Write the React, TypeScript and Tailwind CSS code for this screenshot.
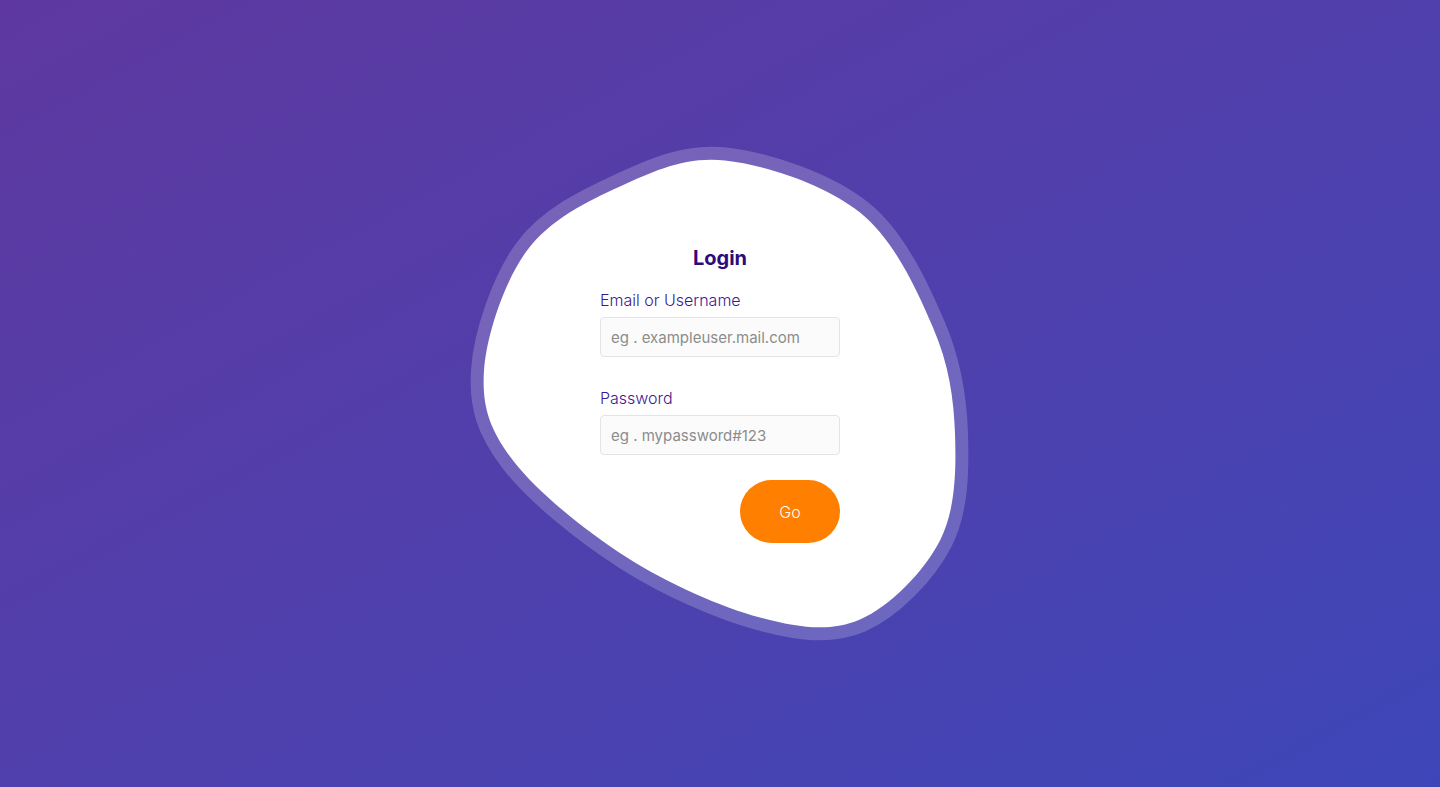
// blob outline, page coords (inner white edge), clockwise from the top
const blobPoints: [number, number][] = [
  [725, 160], [860, 212], [933, 327], [955, 433], [940, 540], [860, 619],
  [760, 617], [627, 557], [513, 460], [484, 370], [527, 250], [620, 186],
];

const toPath = (pts: [number, number][]) => {
  const n = pts.length;
  let d = `M${pts[0][0]},${pts[0][1]}`;
  for (let i = 0; i < n; i++) {
    const p0 = pts[(i - 1 + n) % n];
    const p1 = pts[i];
    const p2 = pts[(i + 1) % n];
    const p3 = pts[(i + 2) % n];
    const c1x = p1[0] + (p2[0] - p0[0]) / 6;
    const c1y = p1[1] + (p2[1] - p0[1]) / 6;
    const c2x = p2[0] - (p3[0] - p1[0]) / 6;
    const c2y = p2[1] - (p3[1] - p1[1]) / 6;
    d += ` C${c1x.toFixed(1)},${c1y.toFixed(1)} ${c2x.toFixed(1)},${c2y.toFixed(1)} ${p2[0]},${p2[1]}`;
  }
  return d + "Z";
};

const Blob = () => (
  <svg width="520" height="510" viewBox="460 138.5 520 510" className="[grid-area:1/1]">
    <path
      d={toPath(blobPoints)}
      fill="#ffffff"
      stroke="rgba(255,255,255,0.2)"
      strokeWidth="26"
      strokeLinejoin="round"
      paintOrder="stroke"
    />
  </svg>
);

const App = () => {
  return (
    <div className="grid h-[787px] w-full place-items-center bg-gradient-to-br from-[#5e38a0] to-[#3d46b8] font-['Inter',sans-serif]">
      <Blob />
      <form className="flex w-[240px] flex-col [grid-area:1/1]" onSubmit={(e) => e.preventDefault()}>
        <h1 className="mb-4 text-center text-xl leading-7 font-bold text-[#2c0b7c]">Login</h1>
        <label className="mb-[5px] text-base leading-6 font-light text-[#3c1a8e]">Email or Username</label>
        <input
          className="h-10 rounded border border-[#e4e4e4] bg-[#fbfbfb] px-[10px] text-[15px] text-gray-700 outline-none placeholder:text-[#8c8c8c]"
          placeholder="eg . exampleuser.mail.com"
        />
        <label className="mt-[29px] mb-[5px] text-base leading-6 font-light text-[#3c1a8e]">Password</label>
        <input
          type="password"
          className="h-10 rounded border border-[#e4e4e4] bg-[#fbfbfb] px-[10px] text-[15px] text-gray-700 outline-none placeholder:text-[#8c8c8c]"
          placeholder="eg . mypassword#123"
        />
        <button className="mt-[25px] h-[63px] w-[100px] self-end rounded-full bg-[#ff7f00] text-base font-light text-white">
          Go
        </button>
      </form>
    </div>
  );
};

export default App;
